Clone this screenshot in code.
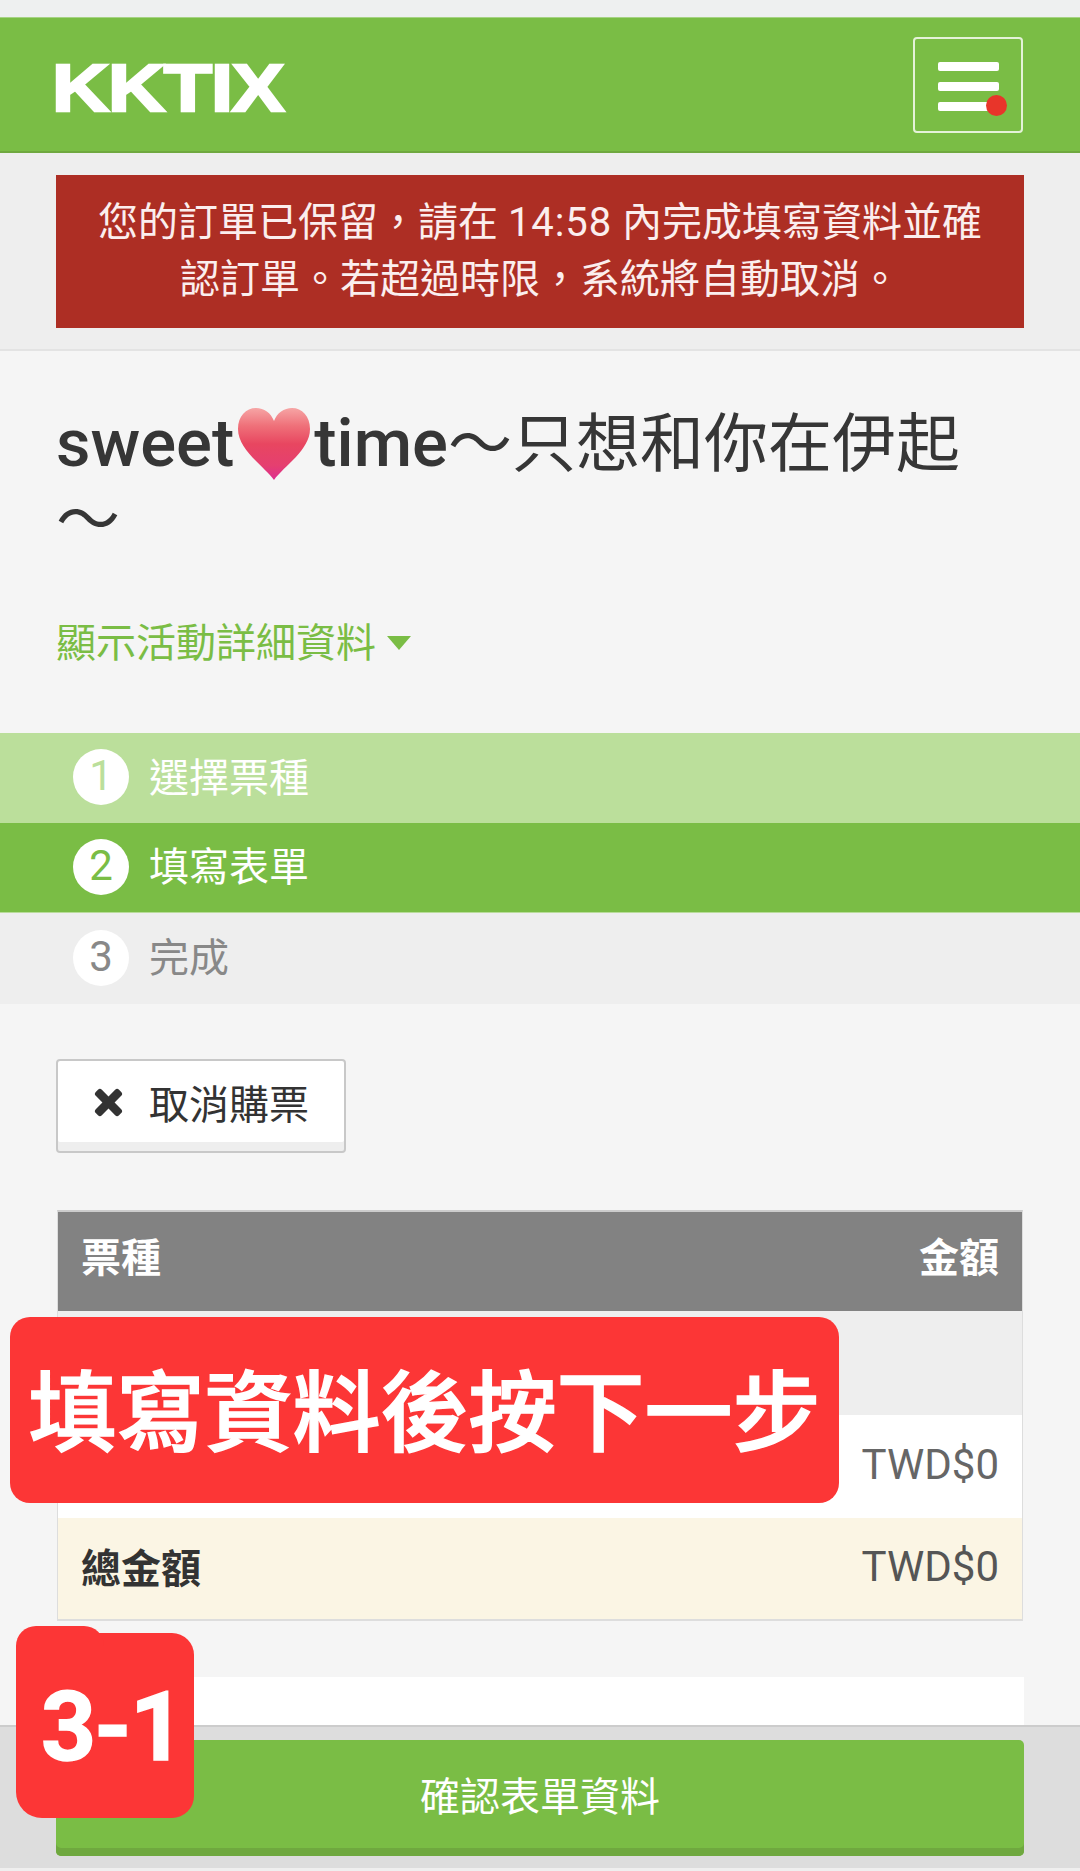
<style>
:global(body){margin:0;background:#f5f5f5}
.page{position:relative;width:1080px;height:1871px;overflow:hidden;background:#f5f5f5;font-family:Roboto,"Noto Sans CJK TC",sans-serif;font-size:40px;color:#333}
.strip{height:17px;background:#eef0f0}
.head{height:136px;box-sizing:border-box;background:#7abd45;border-top:1px solid #a6d384;border-bottom:2px solid #6fa83f;display:flex;align-items:center;justify-content:space-between;padding:0 57px 0 56px}
.logo{display:block;color:#fff;font-family:"Liberation Sans",sans-serif;font-weight:700;font-size:67px;line-height:50px;height:50px;transform:scaleX(1.18);transform-origin:left center;-webkit-text-stroke:2.5px #fff;letter-spacing:-1px;margin:6px 0 0 -4px}
.menu{position:relative;width:110px;height:96px;box-sizing:border-box;border:2px solid #e4f2d8;border-radius:4px;display:flex;flex-direction:column;gap:11px;padding:23px 22px 0 23px}
.menu i{display:block;height:9px;background:#fff;border-radius:2px}
.dot{position:absolute;width:21px;height:21px;border-radius:50%;background:#e8352a;right:14px;top:56px}
.alertwrap{background:#eee;height:198px;box-sizing:border-box;border-bottom:2px solid #e3e3e3;padding:22px 56px 0}
.alert{background:#ad2e24;color:#fbeeee;height:153px;box-sizing:border-box;padding:19px 10px 0;text-align:center;line-height:57px;font-size:40px}
.t{letter-spacing:.9px}
.title{margin:0;padding:55px 56px 0;font-size:67px;line-height:74px;font-weight:500;height:268px;box-sizing:border-box;color:#363636}
.title .cjk{font-weight:400;font-size:64px}
.heart{display:inline-block;width:76px;height:72px;vertical-align:-14px;margin:0 2px 0 2px}
.more{padding:0 56px;color:#7abd45;line-height:50px;display:flex;align-items:center;gap:11px;height:50px}
.tri{width:0;height:0;border-left:12px solid transparent;border-right:12px solid transparent;border-top:14px solid #7abd45;margin-top:-2px}
.steps{margin-top:64px}
.step{height:90px;box-sizing:border-box;display:flex;align-items:center;padding:0 0 2px 73px;gap:20px;color:#fff}
.step span:last-child{margin-bottom:5px}
.s1{background:#bbdf9b}.s2{background:#7abd45;border-bottom:1px solid #b9dc9a}.s3{background:#eee;color:#888;height:91px}
.num{width:56px;height:56px;border-radius:50%;background:#fff;display:flex;align-items:center;justify-content:center;font-size:42px;line-height:1;padding-bottom:2px;box-sizing:border-box}
.s1 .num{color:#bbdf9b}.s2 .num{color:#7abd45}.s3 .num{color:#888}
.cancel{margin:55px 0 0 56px;width:290px;height:94px;box-sizing:border-box;border:2px solid #c8c8c8;border-radius:4px;background:#fff;box-shadow:inset 0 -9px 0 #eee;display:flex;align-items:center;padding:0 0 8px 35px;gap:25px;color:#333}
.cancel svg{width:31px;height:31px;display:block}
.tbl{margin:57px 0 0 57px;width:966px;box-sizing:border-box;border:1px solid #ddd;border-top:2px solid #ccc;border-bottom:2px solid #ddd}
.row{display:flex;align-items:center;justify-content:space-between;padding:0 23px 5px;height:103px;box-sizing:border-box}
.row b{font-weight:700}
.th{background:#828282;color:#fff;height:99px;padding-bottom:14px}
.gray{background:#eee;height:104px}
.white{background:#fff;color:#666}
.total{background:#fbf5e4;color:#555;height:101px}
.total b{color:#333}
.price{font-weight:400;font-size:42px}
.block{margin:56px 56px 0;height:60px;background:#fff}
.foot{position:absolute;left:0;right:0;top:1725px;height:143px;box-sizing:border-box;background:#ddd;border-top:2px solid #ccc;padding:13px 56px 0}
.go{height:116px;box-sizing:border-box;background:#7abd45;border-radius:5px;box-shadow:inset 0 -8px 0 #6fa83f;color:#fff;display:flex;align-items:center;justify-content:center;padding-bottom:8px}
.bottom{position:absolute;left:0;right:0;top:1868px;height:3px;background:#efefef}
.tag{position:absolute;left:10px;top:1317px;width:829px;height:186px;box-sizing:border-box;background:#fc3636;border-radius:20px;color:#fff;font-weight:500;font-size:88px;line-height:1;display:flex;align-items:center;justify-content:center;padding-top:8px;white-space:nowrap;-webkit-text-stroke:1.5px #fff}
.badge{position:absolute;left:16px;top:1633px;width:178px;height:185px;box-sizing:border-box;background:#fc3636;border-radius:22px 22px 22px 26px;color:#fff;font-weight:700;font-size:96px;line-height:1;display:flex;align-items:center;justify-content:center;padding:2px 0 0 14px;letter-spacing:-2px;-webkit-text-stroke:1.5px #fff}
.badge::before{content:"";position:absolute;left:0;top:-7px;width:88px;height:40px;background:#fc3636;border-radius:20px 20px 0 0}
.badge span{position:relative}
</style>

<div class="page">
  <div class="strip"></div>
  <header class="head">
    <span class="logo">KKTIX</span>
    <div class="menu"><i></i><i></i><i></i><span class="dot"></span></div>
  </header>
  <div class="alertwrap">
    <div class="alert">您的訂單已保留，請在 <span class="t">14:58</span> 內完成填寫資料並確<br>認訂單。若超過時限，系統將自動取消。</div>
  </div>
  <h1 class="title">sweet<svg class="heart" viewBox="0 0 76 72"><defs><linearGradient id="hg" x1="0" y1="0" x2="0" y2="1"><stop offset="0" stop-color="#f6a5a5"/><stop offset=".25" stop-color="#ef7079"/><stop offset=".5" stop-color="#e84660"/><stop offset=".8" stop-color="#e53f70"/><stop offset="1" stop-color="#dd2c90"/></linearGradient></defs><path d="M38 72C28 58 2 42 2 21 2 8 10 0 20 0c8 0 15 5 18 13C41 5 48 0 56 0c10 0 18 8 18 21 0 21-26 37-36 51z" fill="url(#hg)"/></svg>time<span class="cjk">～只想和你在伊起<br>～</span></h1>
  <div class="more">顯示活動詳細資料<span class="tri"></span></div>
  <div class="steps">
    <div class="step s1"><span class="num">1</span><span>選擇票種</span></div>
    <div class="step s2"><span class="num">2</span><span>填寫表單</span></div>
    <div class="step s3"><span class="num">3</span><span>完成</span></div>
  </div>
  <div class="cancel"><svg viewBox="0 0 28 28"><path d="M14 8.5L20 2.5a2.5 2.5 0 0 1 3.500 0l2 2a2.500 2.500 0 0 1 0 3.500L19.500 14l6 6a2.500 2.500 0 0 1 0 3.500l-2 2a2.500 2.500 0 0 1-3.500 0L14 19.500l-6 6a2.500 2.500 0 0 1-3.500 0l-2-2a2.500 2.500 0 0 1 0-3.500l6-6-6-6a2.500 2.500 0 0 1 0-3.500l2-2a2.500 2.500 0 0 1 3.500 0z" fill="#333"/></svg>取消購票</div>
  <div class="tbl">
    <div class="row th"><b>票種</b><b>金額</b></div>
    <div class="row gray"></div>
    <div class="row white"><span></span><span class="price">TWD$0</span></div>
    <div class="row total"><b>總金額</b><span class="price">TWD$0</span></div>
  </div>
  <div class="block"></div>
  <div class="foot"><div class="go">確認表單資料</div></div>
  <div class="bottom"></div>
  <div class="tag">填寫資料後按下一步</div>
  <div class="badge"><span>3-1</span></div>
</div>
